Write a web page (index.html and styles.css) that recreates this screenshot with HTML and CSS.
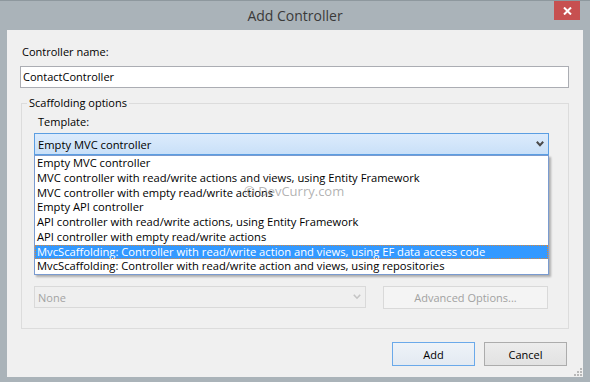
FILE: index.html
```html
<!DOCTYPE html>
<html>
<head>
<meta charset="utf-8">
<link rel="stylesheet" href="styles.css">
</head>
<body>
<div class="window">
  <div class="titlebar">
    <span class="spacer"></span>
    <span class="title">Add Controller</span>
    <div class="close-wrap">
      <div class="close">
        <svg width="9" height="8" viewBox="0 0 9 8"><path d="M1 0.5 L8 7.5 M8 0.5 L1 7.5" stroke="#fff" stroke-width="2" fill="none"/></svg>
      </div>
    </div>
  </div>
  <div class="client">
    <div class="lbl name-lbl">Controller name:</div>
    <div class="textbox">ContactController</div>
    <fieldset class="group">
      <legend>Scaffolding options</legend>
      <div class="lbl tpl-lbl">Template:</div>
      <div class="combo-wrap">
        <div class="combo open">
          <span class="combo-text">Empty MVC controller</span>
          <svg class="chev" width="8" height="6" viewBox="0 0 8 6"><path d="M0.8 0.8 L4 4.2 L7.2 0.8" stroke="#4a4a4a" stroke-width="2" fill="none"/></svg>
        </div>
        <ul class="dropdown">
          <li>Empty MVC controller</li>
          <li>MVC controller with read/write actions and views, using Entity Framework</li>
          <li>MVC controller with empty read/write actions</li>
          <li>Empty API controller</li>
          <li>API controller with read/write actions, using Entity Framework</li>
          <li>API controller with empty read/write actions</li>
          <li class="sel">MvcScaffolding: Controller with read/write action and views, using EF data access code</li>
          <li>MvcScaffolding: Controller with read/write action and views, using repositories</li>
          <li class="watermark">© DevCurry.com</li>
        </ul>
      </div>
      <div class="row">
        <div class="combo disabled">
          <span class="combo-text">None</span>
          <svg class="chev" width="8" height="6" viewBox="0 0 8 6"><path d="M0.8 0.8 L4 4.2 L7.2 0.8" stroke="#c4c4c4" stroke-width="1.6" fill="none"/></svg>
        </div>
        <div class="btn adv">Advanced Options...</div>
      </div>
    </fieldset>
    <div class="buttons">
      <div class="btn default">Add</div>
      <div class="btn">Cancel</div>
    </div>
    <svg class="grip" width="8" height="8" viewBox="0 0 8 8">
      <rect x="6" y="0" width="2" height="2" fill="#b8b8b8"/>
      <rect x="3" y="3" width="2" height="2" fill="#b8b8b8"/>
      <rect x="6" y="3" width="2" height="2" fill="#b8b8b8"/>
      <rect x="0" y="6" width="2" height="2" fill="#b8b8b8"/>
      <rect x="3" y="6" width="2" height="2" fill="#b8b8b8"/>
      <rect x="6" y="6" width="2" height="2" fill="#b8b8b8"/>
    </svg>
  </div>
</div>
</body>
</html>
```

FILE: styles.css
```css
* { box-sizing: border-box; margin: 0; padding: 0; }
html, body { margin: 0; }
body {
  width: 590px;
  height: 382px;
  overflow: hidden;
  font-family: "Open Sans", "Noto Sans", sans-serif;
  font-size: 11px;
  color: #000;
}
.window {
  width: 590px;
  height: 382px;
  background: #aab3b9;
  border-top: 1px solid #8e989e;
  display: flex;
  flex-direction: column;
  padding: 0 7px 5px 7px;
}
.titlebar {
  height: 29px;
  margin: 0 -7px;
  display: grid;
  grid-template-columns: 1fr auto 1fr;
  align-items: start;
}
.title {
  font-size: 14px;
  line-height: 29px;
  color: #3a3a3a;
}
.close-wrap {
  display: flex;
  justify-content: flex-end;
  padding-right: 10px;
}
.close {
  width: 26px;
  height: 19px;
  background: #c75050;
  display: flex;
  align-items: center;
  justify-content: center;
}
.client {
  flex: 1;
  background: #f0f0f0;
  padding: 14px 14px 0 13px;
  display: flex;
  flex-direction: column;
  position: relative;
}
.lbl { line-height: 15px; }
.name-lbl { padding-left: 2px; }
.textbox {
  margin-top: 7px;
  width: 549px;
  height: 22px;
  border: 1px solid #abadb3;
  background: #fff;
  padding-left: 2px;
  line-height: 20px;
}
.group {
  margin-top: 8px;
  margin-left: 1px;
  width: 548px;
  border: 1px solid #dcdcdc;
  padding: 0 12px 19px 12px;
  min-width: 0;
}
.group legend {
  margin-left: -7px;
  padding: 0 2px;
  line-height: 14px;
}
.tpl-lbl { padding-left: 4px; margin-top: 4px; }
.combo-wrap {
  position: relative;
  z-index: 2;
  margin-top: 4px;
  width: 515px;
}
.combo {
  height: 22px;
  display: flex;
  align-items: center;
  justify-content: space-between;
  padding: 0 4px 0 3px;
}
.combo.open {
  border: 1px solid #5b9ee2;
  background: linear-gradient(#dcebfc, #c9e0f8);
  font-size: 11.2px;
}
.combo.disabled {
  width: 332px;
  border: 1px solid #d9d9d9;
  background: #efefef;
  color: #a3a3a3;
}
.dropdown {
  position: absolute;
  left: 0;
  top: 22px;
  width: 515px;
  list-style: none;
  background: #fff;
  border: 1px solid #7a9bd0;
  box-shadow: 2px 2px 2px rgba(0, 0, 0, 0.28);
  font-size: 11.2px;
}
.dropdown li {
  height: 14.75px;
  line-height: 14.75px;
  padding-left: 2px;
  white-space: nowrap;
}
.dropdown li.sel {
  background: #3399ff;
  color: #fff;
  outline: 1px dotted #d9883a;
  outline-offset: -1px;
}
.dropdown li.watermark {
  position: absolute;
  left: 209px;
  top: 27px;
  height: auto;
  font-size: 13px;
  line-height: 16px;
  color: rgba(135, 135, 135, 0.65);
  padding: 0;
}
.row {
  margin-top: 131px;
  display: flex;
  gap: 17px;
  align-items: flex-start;
}
.btn {
  height: 24px;
  width: 83px;
  display: flex;
  align-items: center;
  justify-content: center;
  border: 1px solid #acacac;
  background: linear-gradient(#ececec, #e2e2e2);
}
.btn.adv {
  width: 165px;
  height: 23px;
  border-color: #d9d9d9;
  background: #f4f4f4;
  color: #a2a2a2;
}
.buttons {
  margin-top: 13px;
  display: flex;
  justify-content: flex-end;
  gap: 9px;
  padding-right: 2px;
}
.btn.default {
  border-color: #6aa9ea;
  background: linear-gradient(#eef3f8, #e3eaf2);
}
.grip {
  position: absolute;
  right: 1px;
  bottom: 1px;
}
```
